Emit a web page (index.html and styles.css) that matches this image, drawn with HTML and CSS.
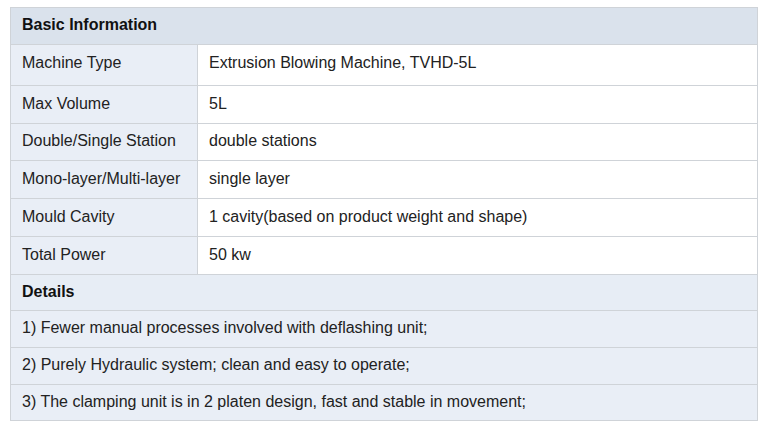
FILE: index.html
```html
<!DOCTYPE html>
<html>
<head>
<meta charset="utf-8">
<link rel="stylesheet" href="styles.css">
</head>
<body>
<table class="spec">
  <tr class="head"><th colspan="2">Basic Information</th></tr>
  <tr class="r1"><td class="label">Machine Type</td><td class="val">Extrusion Blowing Machine, TVHD-5L</td></tr>
  <tr class="r2"><td class="label">Max Volume</td><td class="val">5L</td></tr>
  <tr class="r3"><td class="label">Double/Single Station</td><td class="val">double stations</td></tr>
  <tr class="r4"><td class="label">Mono-layer/Multi-layer</td><td class="val">single layer</td></tr>
  <tr class="r4"><td class="label">Mould Cavity</td><td class="val">1 cavity(based on product weight and shape)</td></tr>
  <tr class="r4"><td class="label">Total Power</td><td class="val">50 kw</td></tr>
  <tr class="dhead"><th colspan="2">Details</th></tr>
  <tr class="d1"><td colspan="2" class="label">1) Fewer manual processes involved with deflashing unit;</td></tr>
  <tr class="d2"><td colspan="2" class="label">2) Purely Hydraulic system; clean and easy to operate;</td></tr>
  <tr class="d3"><td colspan="2" class="label">3) The clamping unit is in 2 platen design, fast and stable in movement;</td></tr>
</table>
</body>
</html>
```
FILE: styles.css
```css
html, body {
  margin: 0;
  padding: 0;
  background: #ffffff;
}
body {
  padding: 7px 0 0 10px;
  font-family: "Liberation Sans", Arial, sans-serif;
  font-size: 16px;
  color: #222222;
}
.spec {
  border-collapse: collapse;
  width: 748px;
}
.spec th, .spec td {
  border: 1px solid #cfd3d8;
  padding: 0 0 2px 11px;
  text-align: left;
  vertical-align: middle;
}
.spec th {
  font-weight: bold;
  background: #dae2ec;
  color: #111111;
}
.head { height: 37px; }
.r1 { height: 41px; }
.r1 td { padding-bottom: 5px; }
.r2 { height: 38px; }
.r3 { height: 37px; }
.r4 { height: 38px; }
.dhead th { background: #e7edf5; height: 33px; }
.d1 { height: 37px; }
.d2 { height: 37px; }
.d3 { height: 36px; }
.label {
  background: #e9eef6;
  width: 175px;
}
.val {
  background: #ffffff;
}
```
